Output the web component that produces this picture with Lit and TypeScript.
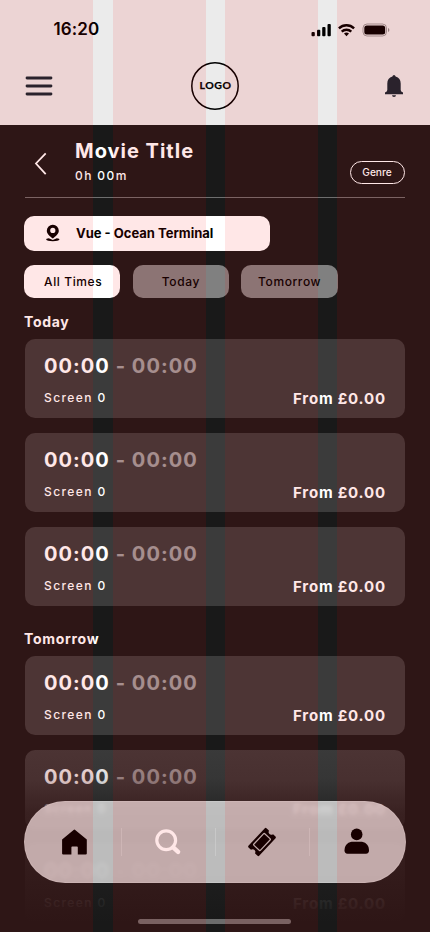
import { LitElement, html, svg, css } from "lit";
import { customElement, property } from "lit/decorators.js";

@customElement("session-card")
class SessionCard extends LitElement {
  @property() start = "00:00";
  @property() end = "00:00";
  static styles = css`
    :host { display: flex; flex-direction: column; justify-content: space-between; box-sizing: border-box;
      height: 79px; padding: 15px 20px 12px 19px; border-radius: 10px; background: rgba(255,255,255,.15); color: #fff; }
    .time { font-size: 20px; line-height: 24px; font-weight: 680; letter-spacing: 1.05px; white-space: pre; }
    .end { opacity: .5; }
    .row { display: flex; justify-content: space-between; align-items: center; height: 16px; }
    .screen { font-size: 12px; font-weight: 500; letter-spacing: 1.4px; position: relative; top: -1px; }
    .price { font-size: 15px; font-weight: 700; letter-spacing: .8px; margin-right: -.8px; }
  `;
  render() {
    return html`<div class="time">${this.start}<span class="end"> - ${this.end}</span></div>
      <div class="row"><span class="screen">Screen 0</span><span class="price">From £0.00</span></div>`;
  }
}

const icons = {
  home: svg`<path d="M12.600 .900Q13.400 .200 14.200 .900L25.800 10.600V24.400Q25.800 25.500 24.700 25.500H16.800V18.300Q16.800 17.500 16 17.500H11.200Q10.400 17.500 10.400 18.300V25.500H2.200Q1.100 25.500 1.100 24.400V10.600Z"/>`,
  search: svg`<circle cx="11.2" cy="11.300" r="9.4" fill="none" stroke="currentColor" stroke-width="3.2"/><path d="M18.2 18.300 23.1 22.900" stroke="currentColor" stroke-width="4.4" stroke-linecap="round"/>`,
  ticket: svg`<g transform="translate(13 13) rotate(-47) scale(.94)"><path d="M-12.8-7.8H12.8Q14-7.8 14-6.6V-3Q11.600-2.200 11.600 0T14 3V6.6Q14 7.8 12.8 7.8H-12.8Q-14 7.8-14 6.6V3Q-11.600 2.200-11.600 0T-14-3V-6.6Q-14-7.800-12.8-7.8Z"/><rect class="ticket-line" x="-8.4" y="-4.8" width="16.8" height="9.6" rx=".6"/></g>`,
  user: svg`<circle cx="12.700" cy="5.400" r="5.8"/><path d="M7.500 12.800H18C22.500 13.500 25 17 25 21.600Q25 24.700 22 24.700H3.500Q.500 24.700 .500 21.600C.500 17 3 13.500 7.500 12.800Z"/>`,
};

@customElement("app-root")
class AppRoot extends LitElement {
  static styles = css`
    :host { display: block; position: relative; width: 430px; height: 932px; overflow: hidden; background: #191919;
      font-family: Inter, "Liberation Sans", sans-serif; color: #fff; }
    * { box-sizing: border-box; }
    svg { display: block; overflow: visible; }
    header { height: 125px; background: #ebebeb; color: #000; }
    .status { height: 59px; padding: 0 40px 0 53px; display: flex; align-items: center; justify-content: space-between; }
    .clock { font-size: 17px; font-weight: 600; letter-spacing: .1px; padding: 0 0 1px .5px; }
    .bar { height: 54px; padding: 0 25px; display: grid; grid-template-columns: 1fr 48px 1fr; align-items: center; }
    .burger, .bell { position: relative; z-index: 1; color: #2a222c; }
    .burger { left: -.5px; }
    .logo { width: 48px; height: 48px; }
    .logo text { font: 700 9.800px Lato, sans-serif; letter-spacing: .5px; }
    .bell { justify-self: end; }
    main { padding: 0 25px; }
    .title { height: 73px; border-bottom: 1px solid #6e6e6e; display: flex; padding-left: 9px; }
    .back { padding-top: 26px; width: 41px; }
    .names { flex: 1; padding-top: 14px; }
    h1 { margin: 0; font-size: 20px; line-height: 24px; font-weight: 700; letter-spacing: 1px; }
    .length { margin-top: 5px; font-size: 12px; line-height: 16px; font-weight: 500; letter-spacing: 1.4px; }
    .genre { align-self: flex-end; margin-bottom: 13px; width: 55px; height: 23px; border: 1px solid #fff; border-radius: 12px;
      font-size: 10.200px; font-weight: 500; padding: 0 1px 1px 0; display: flex; align-items: center; justify-content: center; }
    .venue { margin: 18px 0 0 -1px; width: 246px; height: 35px; border-radius: 10px; background: #fff; color: #000;
      display: flex; align-items: center; padding: 0 0 1px 21px; gap: 15px; font-size: 13px; font-weight: 700; }
    .chips { display: flex; gap: 12.300px; margin: 14px 0 0 -1px; }
    .chip { width: 96.400px; height: 33px; border-radius: 10px; display: flex; align-items: center; justify-content: center;
      font-size: 12px; font-weight: 500; letter-spacing: .6px; background: rgba(255,255,255,.45); color: #000; }
    .chip.on { background: #fff; padding-left: 2px; }
    h2 { font-size: 14px; font-weight: 700; line-height: 18px; letter-spacing: .7px; margin: 15px 0 8px -1px; }
    .list { display: flex; flex-direction: column; gap: 15px; }
    .list + h2 { margin-top: 24px; margin-bottom: 8px; }
    .fade { position: absolute; inset: 740px 0 0; background: linear-gradient(rgba(25,25,25,0) 0, rgba(25,25,25,.15) 20%, rgba(25,25,25,.65) 38%, rgba(25,25,25,.87) 72%, rgba(25,25,25,1) 95%); }
    nav { position: absolute; left: 24px; top: 801px; width: 382px; height: 82px; border-radius: 41px; background: rgba(255,255,255,.7);
      border: 1px solid rgba(255,255,255,.15); backdrop-filter: blur(2px); color: #000; display: grid; grid-template-columns: repeat(4, 94px);
      justify-content: center; align-items: center; padding-left: 2px; }
    .tab { height: 28px; display: flex; align-items: center; justify-content: center; border-right: 1px solid rgba(255,255,255,.2); }
    .tab:last-child { border: 0; }
    .tab.on { color: #fff; }
    .ticket-line { fill: none; stroke: #bcbcbc; stroke-width: 1.3; }
    .indicator { position: absolute; left: 138px; top: 919px; width: 153px; height: 5px; border-radius: 3px; background: #6c6c6c; }
    .columns { position: absolute; inset: 0; display: grid; grid-template-columns: 113px 112px 112px 93px; pointer-events: none; }
    .column { width: 93px; background: rgba(255,0,0,.095); }
  `;
  render() {
    return html`
      <header>
        <div class="status">
          <span class="clock">16:20</span>
          <svg width="79" height="14" viewBox="0 0 79 14" fill="currentColor">
            <rect x="0.500" y="9" width="3.300" height="4.200" rx="1"/><rect x="6" y="6.700" width="3.300" height="6.500" rx="1"/><rect x="11.200" y="4" width="3.300" height="9.200" rx="1"/><rect x="16.500" y="1" width="3.300" height="12.200" rx="1"/>
            <g fill="none" stroke="currentColor" stroke-width="2.400"><path d="M27.900 5.300a11 11 0 0 1 15.200 0"/><path d="M30.700 8.600a7 7 0 0 1 9.600 0"/></g>
            <path d="M33 10.600a3.700 3.700 0 0 1 5 0L35.500 13.200Z"/>
            <rect x="52" y="1" width="23.500" height="12" rx="4" fill="none" stroke="currentColor" opacity=".35"/><rect x="53.300" y="2.400" width="20.900" height="9.200" rx="2.500"/><path d="M77 5v4q1.400-.6 1.400-2T77 5" opacity=".4"/>
          </svg>
        </div>
        <div class="bar">
          <svg class="burger" width="28" height="22" viewBox="0 0 28 22"><path d="M2 3H26M2 11H26M2 19H26" stroke="currentColor" stroke-width="2.800" stroke-linecap="round"/></svg>
          <svg class="logo" viewBox="0 0 48 48"><circle cx="24" cy="24" r="23.200" fill="none" stroke="#000" stroke-width="1.500"/><text x="8.600" y="27.400" textLength="32" lengthAdjust="spacingAndGlyphs" stroke="#000" stroke-width=".25">LOGO</text></svg>
          <svg class="bell" width="22" height="24" viewBox="0 0 22 24" fill="currentColor"><path d="M11 1q1.300 0 1.600 1.500C16 3.600 17.700 6 17.700 9.500V16Q17.700 17.900 20 18.500V20.300H2V18.500Q4.300 17.900 4.300 16V9.500C4.300 6 6 3.600 9.400 2.500Q9.700 1 11 1M9 21.300H13Q13 23.100 11 23.100T9 21.300"/></svg>
        </div>
      </header>
      <main>
        <section class="title">
          <div class="back"><svg width="14" height="26" viewBox="0 0 14 26"><path d="M11.700 2.300 2 12.500 11.700 23.200" fill="none" stroke="#fff" stroke-width="1.800"/></svg></div>
          <div class="names"><h1>Movie Title</h1><div class="length">0h 00m</div></div>
          <div class="genre">Genre</div>
        </section>
        <div class="venue">
          <svg width="16" height="18" viewBox="0 0 16 18"><path fill-rule="evenodd" d="M7.800.8A5.900 5.900 0 0 0 1.800 6.700C1.800 9.800 5 12.300 7.800 14.500 10.600 12.300 13.800 9.800 13.800 6.700A5.900 5.900 0 0 0 7.800.8M7.800 3.800A2.600 2.600 0 1 1 7.800 9A2.600 2.600 0 1 1 7.800 3.800"/><path d="M3.800 14.300 7.800 15.900 11.800 14.300Q14.800 14.600 14.500 15.500 13.500 17.200 7.800 17.200T1.100 15.500Q.8 14.600 3.800 14.300"/></svg>
          <span>Vue - Ocean Terminal</span>
        </div>
        <div class="chips"><div class="chip on">All Times</div><div class="chip">Today</div><div class="chip">Tomorrow</div></div>
        <h2>Today</h2>
        <div class="list"><session-card></session-card><session-card></session-card><session-card></session-card></div>
        <h2>Tomorrow</h2>
        <div class="list"><session-card></session-card><session-card></session-card><session-card></session-card></div>
      </main>
      <div class="fade"></div>
      <nav>${Object.entries(icons).map(([name, art]) => html`<div class="tab ${name === "search" ? "on" : ""}"><svg width="27" height="27" viewBox="0 0 27 27" fill="currentColor">${art}</svg></div>`)}</nav>
      <div class="indicator"></div>
      <div class="columns">${[0, 1, 2, 3].map(() => html`<div class="column"></div>`)}</div>`;
  }
}
